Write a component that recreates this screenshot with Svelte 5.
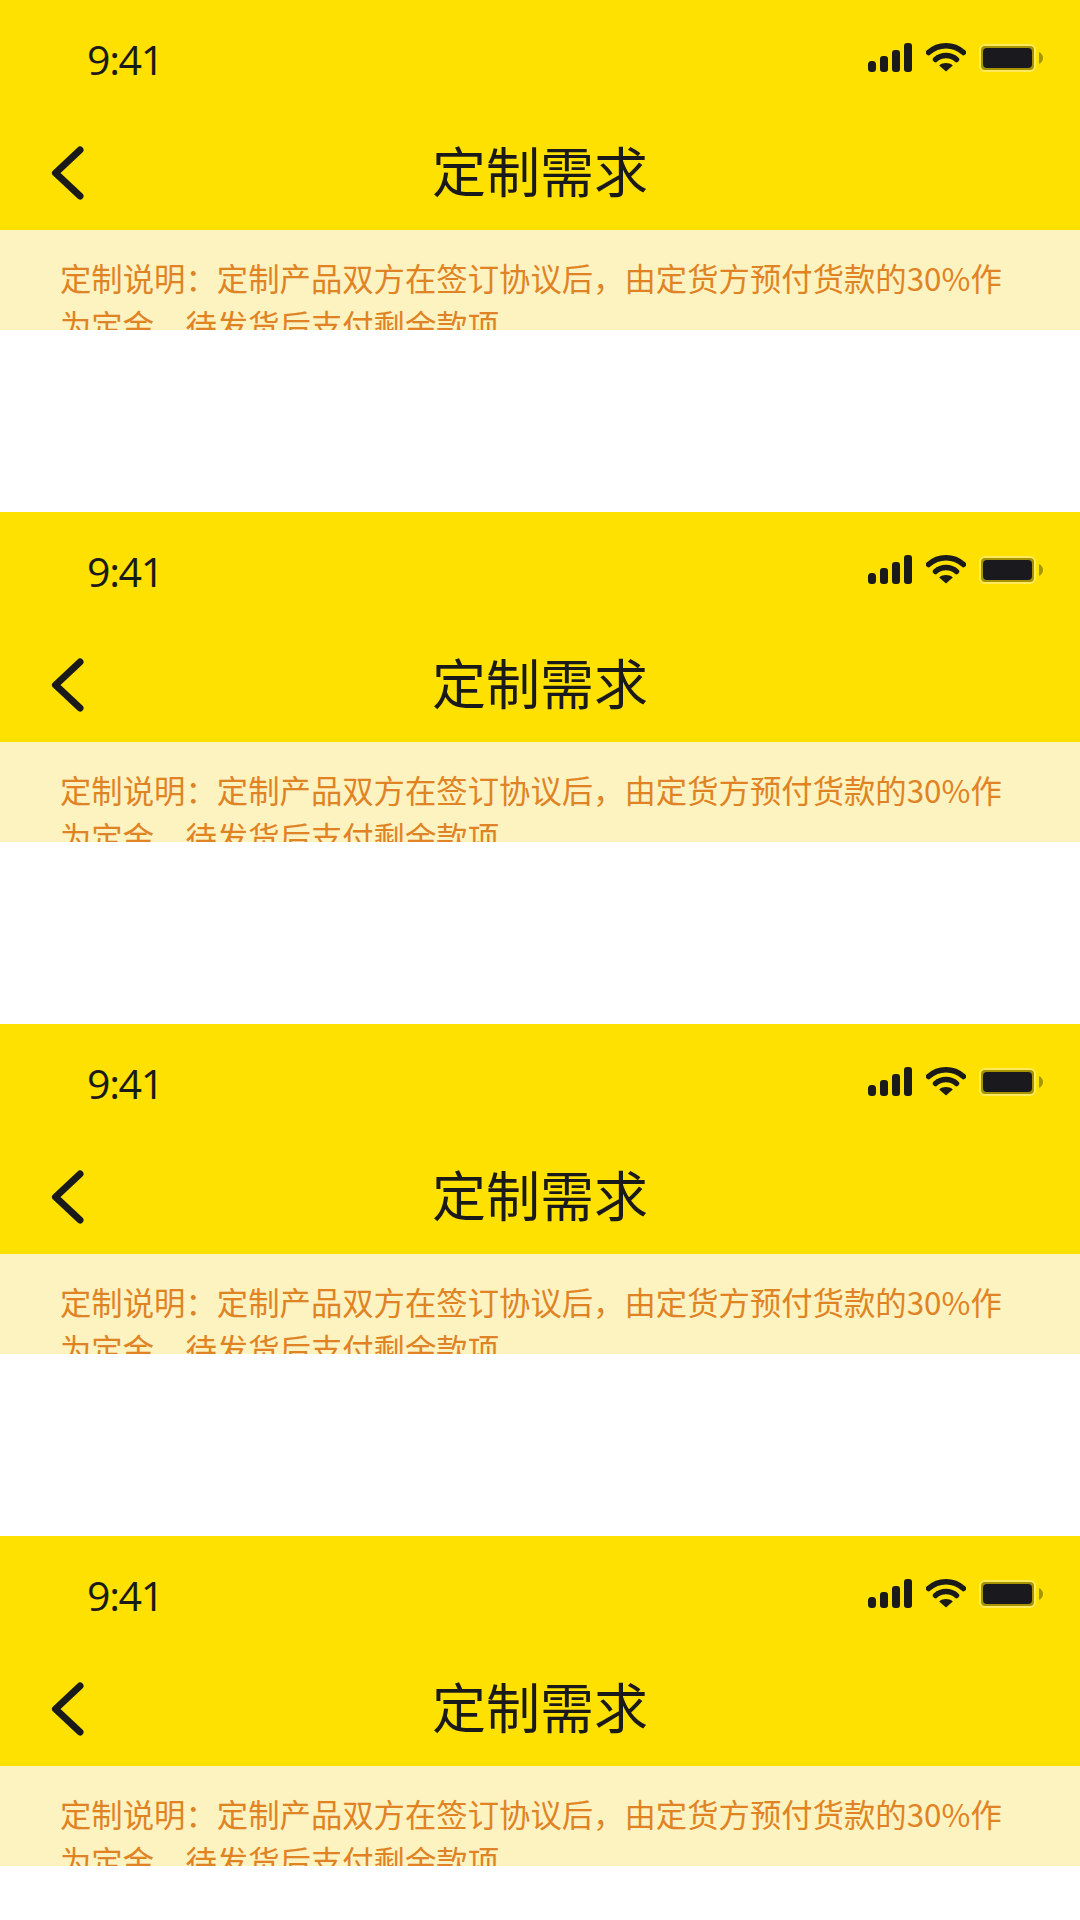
<script>
  const frames = [0, 1, 2, 3];
</script>

<div class="page">
  {#each frames as f}
    <section class="frame">
      <header class="head">
        <div class="status">
          <span class="time">9:41</span>
          <div class="icons">
            <svg class="signal" width="44" height="29" viewBox="0 0 44 29">
              <rect x="0" y="18" width="8" height="11" rx="3.5" />
              <rect x="12" y="13" width="8" height="16" rx="3" />
              <rect x="24" y="7" width="8" height="22" rx="3" />
              <rect x="36" y="0" width="8" height="29" rx="3" />
            </svg>
            <svg class="wifi" width="40" height="30" viewBox="0 0 40 30">
              <path d="M2.5 10.5C12.5 1.5 27.5 1.5 37.5 10.5" class="arc" />
              <path d="M9.5 17.5C15.5 12.2 24.5 12.2 30.5 17.5" class="arc" />
              <path d="M20 29.5 L13.2 23.4 C17 20.2 23 20.2 26.800 23.4Z" class="fan" />
            </svg>
            <div class="battery">
              <div class="shell"><div class="level"></div></div>
              <svg class="nub" width="4" height="12" viewBox="0 0 4 12"><path d="M0 0C2.500 1 4 3.500 4 6S2.500 11 0 12Z" /></svg>
            </div>
          </div>
        </div>
        <div class="nav">
          <svg class="back" width="34" height="54" viewBox="0 0 34 54">
            <path d="M29 4 L4.500 27 L29 50" />
          </svg>
          <h1>定制需求</h1>
        </div>
      </header>
      <div class="note">
        <p>定制说明：定制产品双方在签订协议后，由定货方预付货款的30%作为定金，待发货后支付剩余款项</p>
      </div>
    </section>
  {/each}
</div>

<style>
  :global(body) {
    margin: 0;
    background: #fff;
  }
  .page {
    width: 1080px;
    height: 1920px;
    overflow: hidden;
    font-family: "Noto Sans CJK SC", "Noto Sans", sans-serif;
  }
  .frame {
    height: 512px;
  }
  .head {
    height: 230px;
    background: #ffe100;
    display: flex;
    flex-direction: column;
    color: #1a1a1a;
  }
  .status {
    height: 115px;
    padding: 0 37px 0 87px;
    display: flex;
    justify-content: space-between;
    box-sizing: border-box;
  }
  .time {
    font-family: "Open Sans", sans-serif;
    font-size: 41px;
    letter-spacing: -1.3px;
    line-height: 56px;
    margin-top: 31px;
    height: 56px;
  }
  .icons {
    display: flex;
    align-items: flex-start;
    padding-top: 42px;
  }
  .signal {
    margin: 1px 14px 0 0;
    fill: #1a1a1a;
  }
  .wifi {
    margin-right: 13px;
    margin-top: 0;
  }
  .arc {
    fill: none;
    stroke: #1a1a1a;
    stroke-width: 5.5;
    stroke-linecap: round;
  }
  .fan {
    fill: #1a1a1a;
  }
  .battery {
    display: flex;
    align-items: center;
    margin-top: 2px;
  }
  .shell {
    width: 57px;
    height: 28px;
    box-sizing: border-box;
    border: 2px solid #ffe95c;
    border-radius: 6px;
    background: #a59400;
    padding: 2px;
    display: flex;
  }
  .level {
    flex: 1;
    background: #1a1a1e;
    border-radius: 4px;
  }
  .nub {
    margin-left: 3px;
    fill: #a59400;
  }
  .nav {
    flex: 1;
    position: relative;
    display: flex;
    align-items: center;
    justify-content: center;
  }
  .back {
    position: absolute;
    left: 51px;
    top: 31px;
    fill: none;
    stroke: #1a1a1a;
    stroke-width: 7;
    stroke-linecap: round;
    stroke-linejoin: round;
  }
  h1 {
    font-size: 54px;
    font-weight: 400;
    line-height: 72px;
    margin: 0 0 5px;
  }
  .note {
    height: 100px;
    background: #fcf3c0;
    padding: 24px 60px 0;
    box-sizing: border-box;
    overflow: hidden;
  }
  p {
    margin: 0;
    font-size: 31.36px;
    line-height: 47px;
    color: #e08324;
  }
</style>
